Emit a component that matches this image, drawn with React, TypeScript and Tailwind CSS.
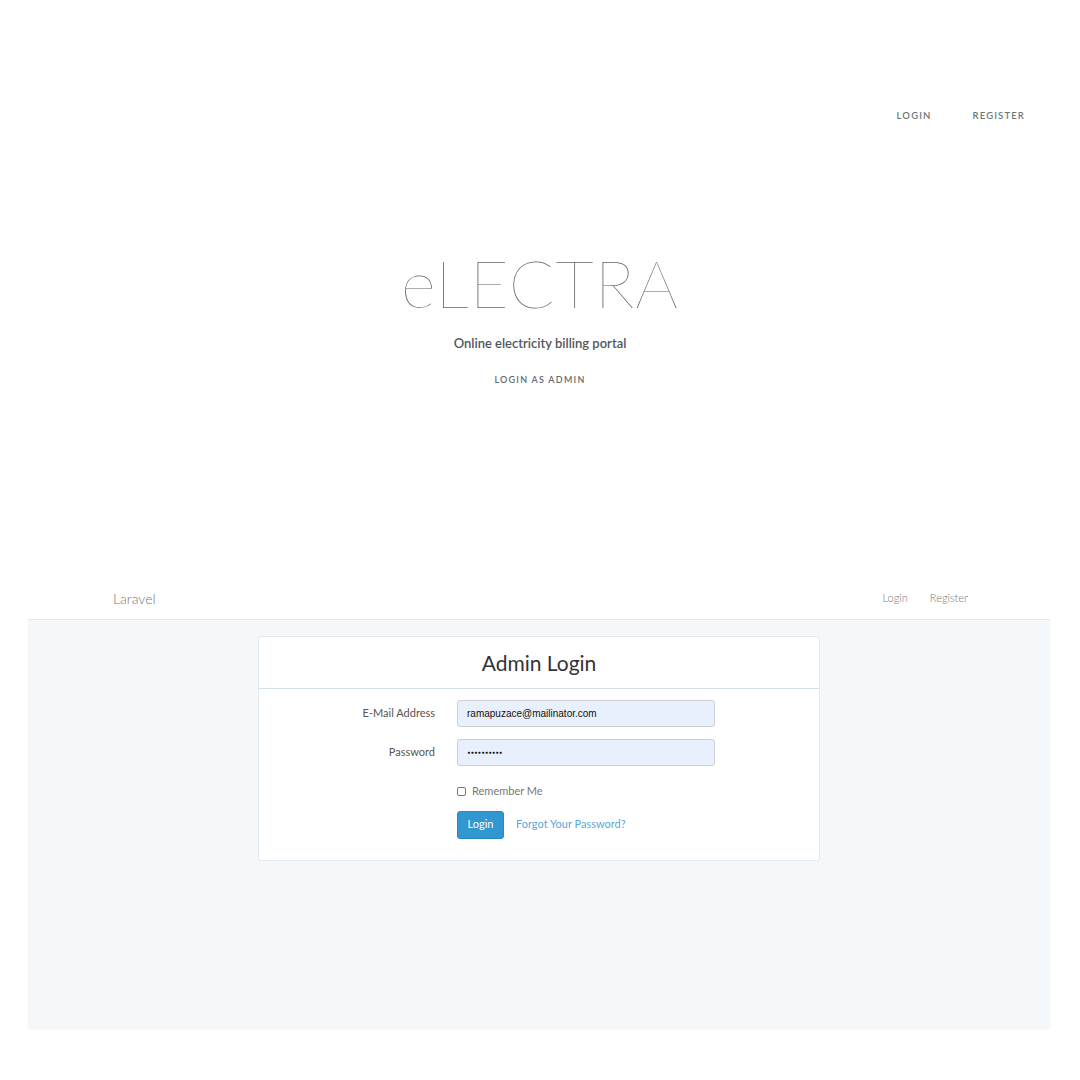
export default function App() {
  return (
    <div className="w-[1080px] h-[1080px] bg-white text-[#636b6f] font-['Lato','Open_Sans',sans-serif]">
      <div className="h-[578px] flex flex-col">
        <nav className="flex justify-end gap-[41px] pt-[109px] pr-[55px] text-[9.5px] font-semibold tracking-[0.12em] uppercase text-[#6f777b]">
          <a>Login</a>
          <a>Register</a>
        </nav>
        <div className="flex flex-col items-center mt-[126px]">
          <h1 className="text-[67px] leading-none font-thin tracking-[0.015em] text-[#5d6569]">eLECTRA</h1>
          <p className="mt-[18px] text-[13px] font-semibold text-[#4f575c]">Online electricity billing portal</p>
          <a className="mt-[19px] text-[9px] font-semibold tracking-[0.14em] uppercase">Login as Admin</a>
        </div>
      </div>

      <div className="mx-[28px] w-[1022px] h-[450px] flex flex-col">
        <div className="h-[42px] bg-white border-b border-[#e3e9ee] flex items-center justify-between pl-[85px] pr-[82px]">
          <span className="text-[14px] font-light text-[#777]">Laravel</span>
          <div className="flex gap-[22px] text-[11px] font-light text-[#777]">
            <a>Login</a>
            <a>Register</a>
          </div>
        </div>
        <div className="flex-1 flex justify-center pt-[16px] bg-[#f5f8fa] shadow-[0_1px_2px_rgba(0,0,0,0.06)]">
          <div className="w-[562px] h-[225px] bg-white border border-[#e3e9ee] rounded-[3px]">
            <div className="h-[52px] border-b border-[#d3e0e9] flex items-center justify-center">
              <h2 className="text-[21px] font-normal text-[#333]">Admin Login</h2>
            </div>
            <div className="pt-[11px] pb-[21px]">
              <div className="flex items-center">
                <label className="w-[176px] text-right text-[11px] text-[#555]">E-Mail Address</label>
                <div className="ml-[22px] w-[258px] h-[27px] bg-[#e8f0fe] border border-[#ccd0d2] rounded-[3px] flex items-center pl-[9px] text-[10px] text-[#111] font-['Liberation_Sans',sans-serif]">
                  ramapuzace@mailinator.com
                </div>
              </div>
              <div className="flex items-center mt-[12px]">
                <label className="w-[176px] text-right text-[11px] text-[#555]">Password</label>
                <div className="ml-[22px] w-[258px] h-[27px] bg-[#e8f0fe] border border-[#ccd0d2] rounded-[3px] flex items-center pl-[9px] text-[6px] font-bold text-[#111] tracking-[-0.05em] font-['DejaVu_Sans',sans-serif]">
                  ••••••••••
                </div>
              </div>
              <div className="ml-[198px] mt-[17px] flex items-center gap-[6px] text-[11px] text-[#777]">
                <span className="w-[9px] h-[9px] border border-[#777] rounded-[2px] inline-block" />
                <span>Remember Me</span>
              </div>
              <div className="ml-[198px] mt-[11px] flex items-center gap-[12px]">
                <button className="h-[28px] w-[47px] bg-[#3097d1] text-white text-[11px] rounded-[3px] border border-[#2a88bd]">Login</button>
                <a className="text-[11px] text-[#5aa7d8]">Forgot Your Password?</a>
              </div>
            </div>
          </div>
        </div>
      </div>
    </div>
  );
}
